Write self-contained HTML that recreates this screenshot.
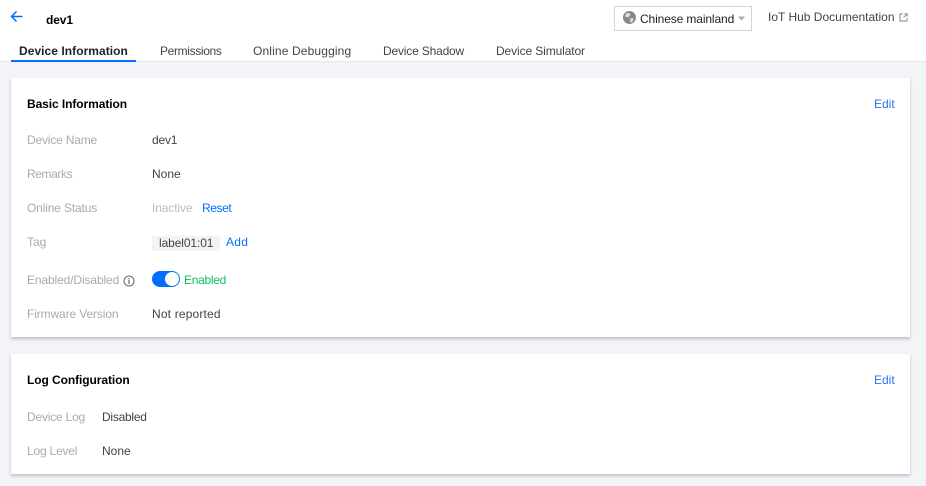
<!DOCTYPE html>
<html><head><meta charset="utf-8">
<style>
html,body{margin:0;padding:0;width:926px;height:486px;overflow:hidden;background:#f2f4f8;font-family:"Liberation Sans",sans-serif;font-size:12px;color:#333}
.t{position:absolute;white-space:nowrap;line-height:16px}
.top{position:absolute;left:0;top:0;width:926px;height:61px;background:#fff;border-bottom:1px solid #e3e6eb}
.card{position:absolute;left:11px;width:899px;background:#fff;box-shadow:0 2px 3px rgba(54,58,80,.28)}
.l{color:#aaa}.b{font-weight:bold;color:#000}.a{color:#006eff}.v{color:#444}
</style></head><body>
<div class="top"></div>
<svg style="position:absolute;left:10px;top:10px" width="14" height="14" viewBox="0 0 14 14"><path d="M12.500 6.500H2M6.500 1.500L1.500 6.500L6.500 11.500" fill="none" stroke="#006eff" stroke-width="1.500"/></svg>
<div class="t b" style="left:46px;top:12px;letter-spacing:-.1px">dev1</div>
<div style="position:absolute;left:614px;top:6px;width:136px;height:23px;border:1px solid #cfd5de;background:#fff"></div>
<svg style="position:absolute;left:623px;top:11px" width="13" height="13" viewBox="0 0 13 13"><circle cx="6.500" cy="6.500" r="6.500" fill="#888"/><path d="M3 2.500L6.500 2L7.500 4L5 6.500L2 5.500ZM7 7.500L10.500 7L9.500 11L7.500 11.500Z" fill="#ddd"/></svg>
<div class="t" style="left:640px;top:11px;color:#222;letter-spacing:-.12px">Chinese mainland</div>
<svg style="position:absolute;left:738px;top:16px" width="8" height="5"><path d="M0 0.500H7L3.500 4.500Z" fill="#aaa"/></svg>
<div class="t" style="left:768px;top:9px;color:#444;letter-spacing:0">IoT Hub Documentation</div>
<svg style="position:absolute;left:899px;top:13px" width="9" height="9" viewBox="0 0 9 9"><path d="M4 1H1V8H8V5M4.500 4.500L8 1M5.500 0.800H8.200V3.500" fill="none" stroke="#999" stroke-width="1.200"/></svg>
<div class="t" style="left:19px;top:43px;font-weight:bold;color:#222;letter-spacing:.05px">Device Information</div>
<div style="position:absolute;left:11px;top:60px;width:125px;height:2px;background:#006eff"></div>
<div class="t" style="left:160px;top:43px;color:#444;letter-spacing:-.35px">Permissions</div>
<div class="t" style="left:253px;top:43px;color:#444;letter-spacing:.14px">Online Debugging</div>
<div class="t" style="left:383px;top:43px;color:#444;letter-spacing:-.18px">Device Shadow</div>
<div class="t" style="left:496px;top:43px;color:#444;letter-spacing:-.11px">Device Simulator</div>

<div class="card" style="top:78px;height:259px"></div>
<div class="t b" style="left:27px;top:96px;letter-spacing:-.08px">Basic Information</div>
<div class="t a" style="left:874px;top:96px;color:#2a72f0">Edit</div>
<div class="t l" style="left:27px;top:132px;letter-spacing:-.18px">Device Name</div>
<div class="t v" style="left:152px;top:132px;letter-spacing:-.2px">dev1</div>
<div class="t l" style="left:27px;top:166px;letter-spacing:-.4px">Remarks</div>
<div class="t v" style="left:152px;top:166px">None</div>
<div class="t l" style="left:27px;top:200px;letter-spacing:-.15px">Online Status</div>
<div class="t" style="left:152px;top:200px;color:#bbb;letter-spacing:-.12px">Inactive</div>
<div class="t a" style="left:202px;top:200px;letter-spacing:-.4px">Reset</div>
<div class="t l" style="left:27px;top:234px">Tag</div>
<div style="position:absolute;left:152px;top:236px;width:68px;height:15px;background:#f2f3f6"></div>
<div class="t v" style="left:159px;top:235px;letter-spacing:-.1px">label01:01</div>
<div class="t a" style="left:226px;top:234px;letter-spacing:.3px">Add</div>
<div class="t l" style="left:27px;top:272px;letter-spacing:-.12px">Enabled/Disabled</div>
<svg style="position:absolute;left:123px;top:275px" width="12" height="12" viewBox="0 0 12 12"><circle cx="6" cy="6" r="5" fill="none" stroke="#666"/><path d="M6 5V9M6 3V4.200" stroke="#666" stroke-width="1.200"/></svg>
<div style="position:absolute;left:152px;top:271px;width:28px;height:16px;border-radius:8px;background:#006eff"></div>
<div style="position:absolute;left:165px;top:272px;width:14px;height:14px;border-radius:50%;background:#fff"></div>
<div class="t" style="left:184px;top:272px;color:#0abf5b;letter-spacing:-.28px">Enabled</div>
<div class="t l" style="left:27px;top:306px;letter-spacing:-.12px">Firmware Version</div>
<div class="t v" style="left:152px;top:306px;letter-spacing:.17px">Not reported</div>

<div class="card" style="top:354px;height:120px"></div>
<div class="t b" style="left:27px;top:372px;letter-spacing:-.08px">Log Configuration</div>
<div class="t a" style="left:874px;top:372px;color:#2a72f0">Edit</div>
<div class="t l" style="left:27px;top:409px;letter-spacing:-.2px">Device Log</div>
<div class="t v" style="left:102px;top:409px;letter-spacing:-.25px">Disabled</div>
<div class="t l" style="left:27px;top:443px;letter-spacing:-.2px">Log Level</div>
<div class="t v" style="left:102px;top:443px">None</div>
</body></html>
